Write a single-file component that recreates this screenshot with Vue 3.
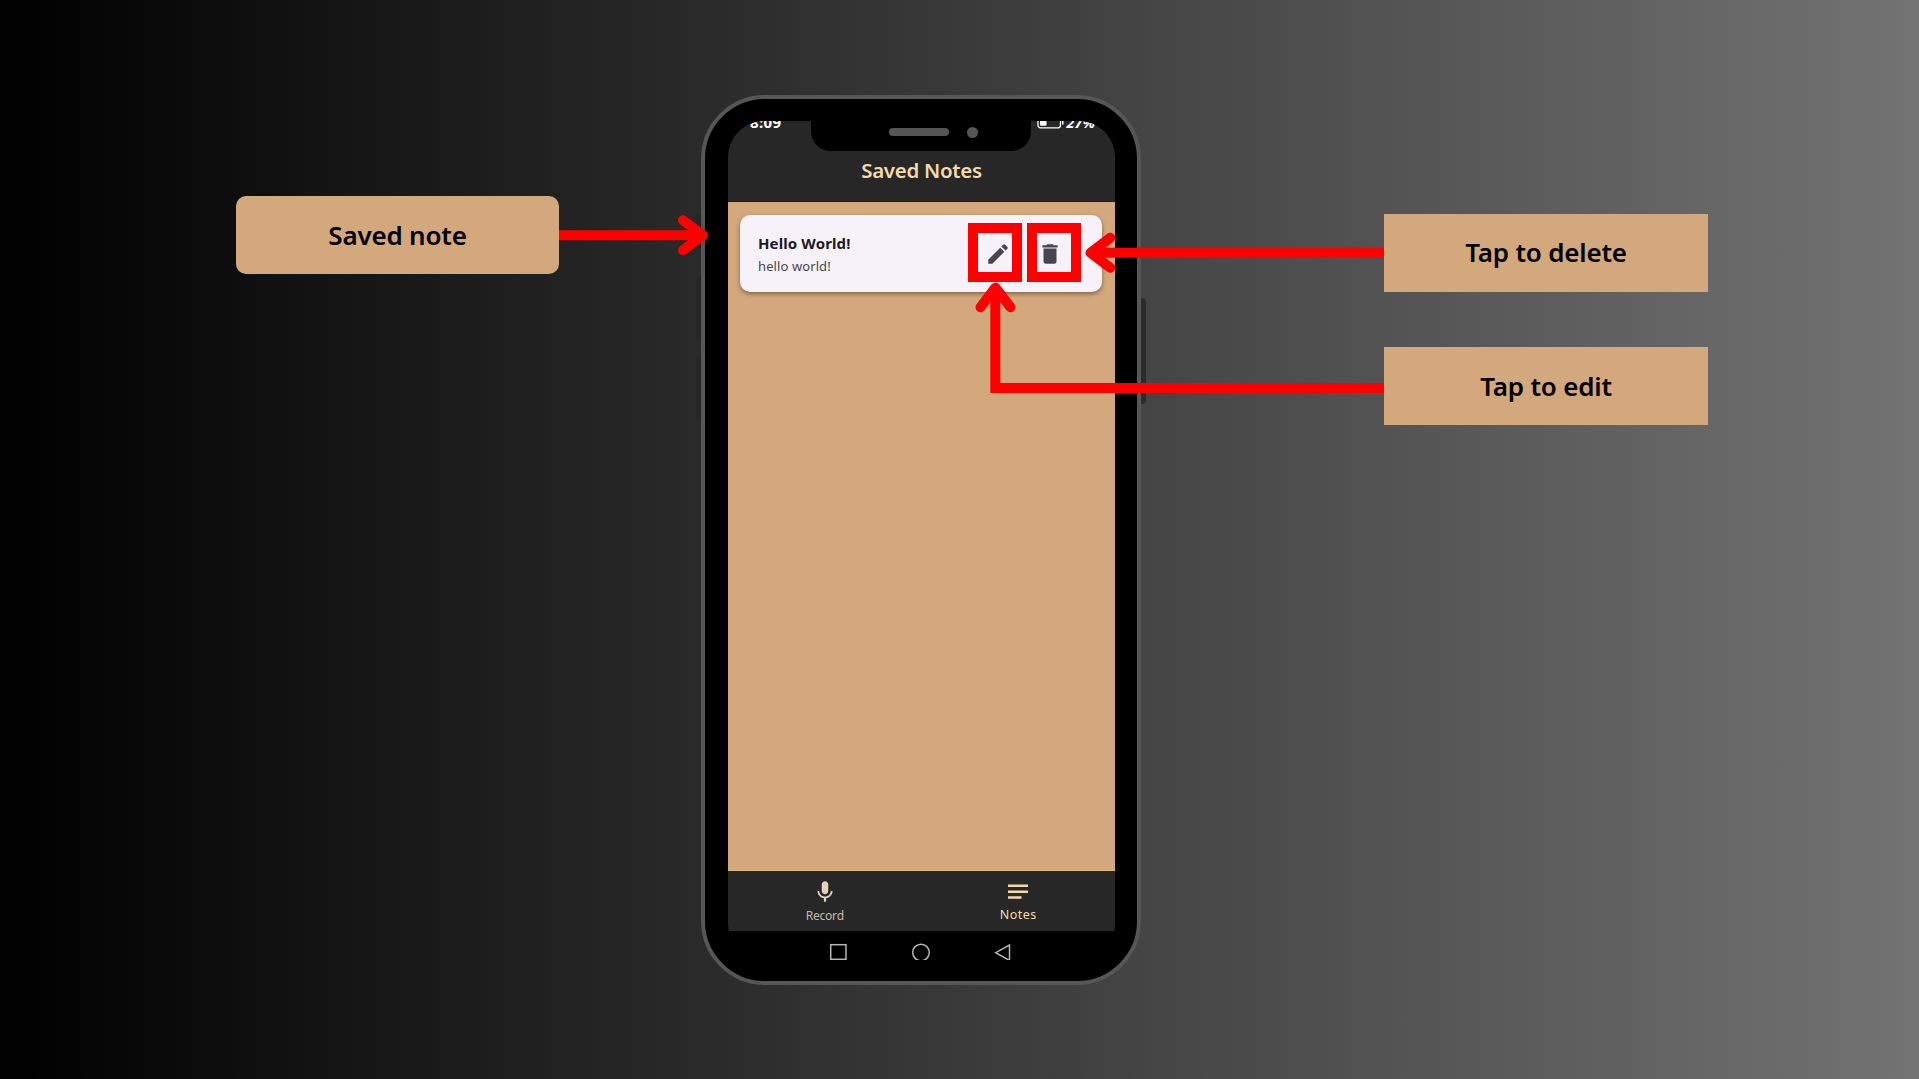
<script setup>
const labels = [
  { id: 'saved', text: 'Saved note' },
  { id: 'delete', text: 'Tap to delete' },
  { id: 'edit', text: 'Tap to edit' },
]
</script>

<template>
  <main class="board">
    <div class="side mute"></div>
    <div class="side vol-up"></div>
    <div class="side vol-down"></div>
    <div class="side power"></div>

    <section class="phone">
      <div class="screen">
        <header class="top">
          <div class="status">
            <span class="time">8:09</span>
            <span class="charge">
              <svg width="28" height="13" viewBox="0 0 28 13">
                <rect x="1" y=".8" width="22.5" height="11" rx="2.5" fill="none" stroke="#fff" stroke-width="1.3" />
                <rect x="3" y="3" width="6.5" height="6.7" rx="1" fill="#fff" />
                <rect x="25" y="4" width="1.5" height="4.5" fill="#fff" />
              </svg>
              <span class="pct">27%</span>
            </span>
          </div>
          <h1>Saved Notes</h1>
        </header>
        <div class="content">
          <article class="card">
            <div class="words">
              <h2>Hello World!</h2>
              <p>hello world!</p>
            </div>
            <svg class="icon pencil" width="26" height="26" viewBox="0 0 24 24"><path fill="#47454f" d="M3 17.25V21h3.75L17.81 9.94l-3.75-3.75L3 17.25zM20.71 7.04a1 1 0 0 0 0-1.41l-2.34-2.34a1 1 0 0 0-1.41 0l-1.83 1.83 3.75 3.75 1.83-1.83z" /></svg>
            <svg class="icon" width="26" height="26" viewBox="0 0 24 24"><path fill="#47454f" d="M6 19c0 1.1.9 2 2 2h8c1.100 0 2-.9 2-2V7H6v12zM19 4h-3.500l-1-1h-5l-1 1H5v2h14V4z" /></svg>
          </article>
        </div>
        <nav class="tabs">
          <div class="tab record">
            <svg width="26" height="26" viewBox="0 0 24 24">
              <path fill="#e3d3bd" d="M12 14c1.660 0 3-1.340 3-3V5c0-1.660-1.340-3-3-3S9 3.340 9 5v6c0 1.660 1.340 3 3 3z" />
              <path fill="#e3d3bd" d="M17.300 11c0 3-2.540 5.100-5.300 5.100S6.700 14 6.700 11H5c0 3.410 2.720 6.230 6 6.720V21h2v-3.280c3.280-.48 6-3.300 6-6.720h-1.700z" />
            </svg>
            <span>Record</span>
          </div>
          <div class="tab notes">
            <svg width="26" height="26" viewBox="0 0 26 26"><path fill="#f5d9a8" d="M3 5.500h20v2.500H3zM3 11.500h20v2.500H3zM3 17.200h13.500v2.500H3z" /></svg>
            <span>Notes</span>
          </div>
        </nav>
        <footer class="system">
          <svg width="387" height="29" viewBox="0 0 387 29" fill="none" stroke="#b5b5b5" stroke-width="1.500">
            <rect x="102.700" y="13.700" width="15.300" height="14.600" />
            <circle cx="193" cy="21.500" r="8.300" />
            <path d="M281.500 14v15.500L267.700 21.700z" />
          </svg>
        </footer>
      </div>
      <div class="notch"><i class="speaker"></i><i class="camera"></i></div>
    </section>

    <div v-for="label in labels" :key="label.id" class="label" :class="label.id"><span>{{ label.text }}</span></div>

    <div class="frame frame-edit"></div>
    <div class="frame frame-delete"></div>
    <svg class="arrows" width="1919" height="1079" viewBox="0 0 1919 1079" fill="none" stroke="#f00" stroke-width="10" stroke-linejoin="round">
      <path d="M559 235.300H700M1384 252.800H1093M1384 388H995.300V292" stroke-linejoin="miter" />
      <path d="M683 220.300L703 235.300L683 250.300M1110.300 237.800L1090.500 252.800L1110.300 267.800M980.500 307.300L995.400 287.600L1010.500 307.300" stroke-linecap="round" />
    </svg>
  </main>
</template>

<style>
body { margin: 0; overflow: hidden; }
</style>

<style scoped>
.board {
  position: relative;
  width: 1919px;
  height: 1079px;
  overflow: hidden;
  background: linear-gradient(90deg, #000, #737373);
  font-family: "Noto Sans", "Open Sans", sans-serif;
}
h1, h2, p { margin: 0; }
svg { display: block; }
.phone {
  position: absolute;
  left: 701px;
  top: 95px;
  width: 440px;
  height: 890px;
  box-sizing: border-box;
  border: 4px solid #565656;
  border-radius: 64px;
  background: #000;
  padding: 22px 23px;
}
.screen {
  display: flex;
  flex-direction: column;
  width: 387px;
  height: 839px;
  border-radius: 36px;
  overflow: hidden;
  background: #000;
}
.top {
  height: 81px;
  box-sizing: border-box;
  border-bottom: 1px solid #211b1c;
  background: #272727;
  color: #fff;
  flex: none;
}
.status {
  display: flex;
  justify-content: space-between;
  height: 29px;
  padding: 0 20px 0 22px;
  font-size: 15px;
  font-weight: 700;
  line-height: 20px;
}
.time { margin-top: -9px; letter-spacing: .4px; }
.charge { display: flex; margin-top: -9px; gap: 2px; }
.charge svg { margin-top: 4px; }
.pct { font-style: italic; font-size: 14.500px; }
h1 {
  color: #f5d9a8;
  font-size: 20.500px;
  font-weight: 600;
  letter-spacing: -.3px;
  line-height: 40px;
  text-align: center;
}
.content {
  flex: 1;
  box-sizing: border-box;
  padding: 13px 13px 0 12px;
  background: #d3a87c;
  border-bottom: 1px solid #dfb77f;
}
.card {
  display: flex;
  align-items: center;
  height: 77px;
  box-sizing: border-box;
  padding: 0 39px 0 18px;
  border-radius: 10px;
  background: #f7f1fa;
  box-shadow: 0 2px 4px rgba(70, 45, 20, .55);
}
.words { flex: 1; padding-top: 1px; }
h2 { color: #1d1b22; font-size: 15px; font-weight: 700; line-height: 23px; letter-spacing: .12px; }
p { color: #47454f; font-size: 13px; line-height: 22px; letter-spacing: .1px; }
.pencil { margin-right: 26px; }
.tabs { display: flex; height: 60px; background: #272727; flex: none; }
.tab {
  flex: 1;
  display: flex;
  flex-direction: column;
  align-items: center;
  padding-top: 8px;
  font-size: 12px;
  line-height: 16px;
}
.record { color: #c9bba7; }
.record span { margin-top: 3px; letter-spacing: -.2px; }
.notes { color: #f5d9a8; }
.notes span { margin-top: 2px; font-size: 12.500px; letter-spacing: .5px; }
.system { height: 29px; flex: none; }
.notch {
  position: absolute;
  left: 106px;
  top: 20px;
  width: 220px;
  height: 32px;
  border-radius: 0 0 20px 20px;
  background: #000;
  display: flex;
  align-items: center;
  box-sizing: border-box;
  padding: 0 0 6px 78px;
  gap: 18px;
}
.speaker { width: 60px; height: 8px; border-radius: 4px; background: #565656; }
.camera { width: 11px; height: 11px; border-radius: 50%; background: #565656; }
.side { position: absolute; width: 5px; background: #262626; border-radius: 4px 0 0 4px; left: 696px; }
.mute { top: 213px; height: 35px; }
.vol-up { top: 277px; height: 65px; }
.vol-down { top: 356px; height: 66px; }
.power { left: 1141px; top: 298px; height: 106px; border-radius: 0 4px 4px 0; background: #2b2b2b; }
.label {
  position: absolute;
  width: 324px;
  height: 78px;
  display: flex;
  align-items: center;
  justify-content: center;
  background: #d3a87c;
  color: #000;
  font-size: 26px;
  font-weight: 600;
  letter-spacing: -.2px;
  white-space: nowrap;
}
.saved { left: 236px; top: 196px; width: 323px; border-radius: 10px; }
.delete { left: 1384px; top: 214px; }
.delete span { margin-top: -2px; }
.edit { left: 1384px; top: 347px; }
.frame { position: absolute; width: 54px; height: 59px; top: 223px; box-sizing: border-box; border: 10px solid #f00; }
.frame-edit { left: 968px; }
.frame-delete { left: 1027px; }
.arrows { position: absolute; left: 0; top: 0; }
</style>
